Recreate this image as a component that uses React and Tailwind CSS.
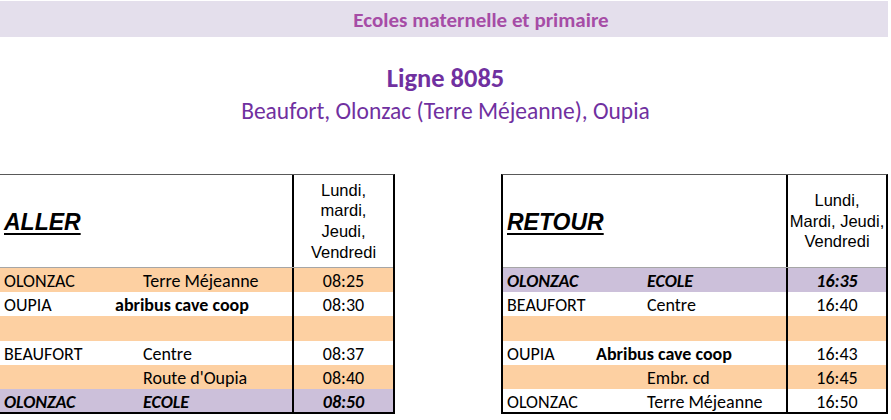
import React from 'react';

const calibri = { fontFamily: 'Carlito, Lato, "Open Sans", sans-serif' };

const ORANGE = 'bg-[#fdd0a2]';
const PURPLE = 'bg-[#ccc0da]';

const allerRows = [
  { bg: ORANGE, a: 'OLONZAC', b: 'Terre Méjeanne', t: '08:25', h: 'h-[24px]' },
  { bg: 'bg-white', a: 'OUPIA', b: 'abribus cave coop', bold: true, t: '08:30', h: 'h-[24px]' },
  { bg: ORANGE, a: '', b: '', t: '', h: 'h-[25px]' },
  { bg: 'bg-white', a: 'BEAUFORT', b: 'Centre', t: '08:37', h: 'h-[24px]' },
  { bg: ORANGE, a: '', b: "Route d'Oupia", t: '08:40', h: 'h-[24px]' },
  { bg: PURPLE, a: 'OLONZAC', b: 'ECOLE', t: '08:50', h: 'h-[23px]', strong: true },
];

const retourRows = [
  { bg: PURPLE, a: 'OLONZAC', b: 'ECOLE', t: '16:35', h: 'h-[24px]', strong: true },
  { bg: 'bg-white', a: 'BEAUFORT', b: 'Centre', t: '16:40', h: 'h-[24px]' },
  { bg: ORANGE, a: '', b: '', t: '', h: 'h-[25px]' },
  { bg: 'bg-white', a: 'OUPIA', b: 'Abribus cave coop', bold: true, t: '16:43', h: 'h-[24px]' },
  { bg: ORANGE, a: '', b: 'Embr. cd', t: '16:45', h: 'h-[24px]' },
  { bg: 'bg-white', a: 'OLONZAC', b: 'Terre Méjeanne', t: '16:50', h: 'h-[23px]' },
];

const Row = ({ row, leftW, colB, colBold }) => (
  <div className={`flex ${row.h} ${row.bg}`} style={calibri}>
    <div className={`${leftW} relative shrink-0 text-[18px] text-black leading-none`}>
      <span
        className={`absolute left-[4px] top-[calc(50%+1px)] -translate-y-1/2 ${row.strong ? 'font-bold italic' : ''}`}
      >
        {row.a}
      </span>
      <span
        className={`absolute top-[calc(50%+1px)] -translate-y-1/2 whitespace-nowrap ${
          row.bold ? `font-bold ${colBold}` : colB
        } ${row.strong ? 'font-bold italic' : ''}`}
      >
        {row.b}
      </span>
    </div>
    <div
      className={`flex-1 border-l-2 border-black flex items-center justify-center pt-[2px] text-[18px] leading-none text-black ${
        row.strong ? 'font-bold italic' : ''
      }`}
    >
      {row.t}
    </div>
  </div>
);

const Table = ({ title, days, rows, width, leftW, colB, colBold, leftBorder }) => (
  <div
    className={`${width} border-t border-t-[#595959] border-r-2 border-r-black border-b-2 border-b-black ${
      leftBorder ? 'border-l-2 border-l-black' : ''
    }`}
  >
    <div className="flex h-[93px] border-b border-b-[#a6a6a6]">
      <div
        className={`${leftW} shrink-0 flex items-center pl-[4px] pt-[3px]`}
        style={{ fontFamily: '"Liberation Sans", Arial, sans-serif' }}
      >
        <span className="text-[23px] font-bold italic underline decoration-2 underline-offset-[3px] text-black">
          {title}
        </span>
      </div>
      <div
        className="flex-1 border-l-2 border-black flex flex-col items-center justify-center text-center text-[16.5px] leading-[20.7px] text-black whitespace-nowrap"
        style={{ fontFamily: '"Liberation Sans", Arial, sans-serif' }}
      >
        {days.map((d) => (
          <span key={d}>{d}</span>
        ))}
      </div>
    </div>
    {rows.map((r, i) => (
      <Row key={i} row={r} leftW={leftW} colB={colB} colBold={colBold} />
    ))}
  </div>
);

export default function App() {
  return (
    <div className="w-[891px] h-[420px] bg-white overflow-hidden">
      {/* Header band */}
      <div
        className="mt-px h-[36px] w-[888px] bg-[#e4dfec] flex items-center justify-center pl-[74px] pt-[3px]"
        style={calibri}
      >
        <span className="text-[21px] leading-none font-bold text-[#a64ca6]">Ecoles maternelle et primaire</span>
      </div>

      {/* Title */}
      <div className="flex flex-col items-center text-[#7030a0]" style={calibri}>
        <div className="mt-[26px] text-[26.5px] font-bold leading-[30px]">Ligne 8085</div>
        <div className="mt-[4px] text-[23.5px] leading-[28px]">Beaufort, Olonzac (Terre Méjeanne), Oupia</div>
      </div>

      {/* Tables */}
      <div className="flex mt-[49px] gap-[106px]">
        <Table
          title="ALLER"
          days={['Lundi,', 'mardi,', 'Jeudi,', 'Vendredi']}
          rows={allerRows}
          width="w-[395px]"
          leftW="w-[292px]"
          colB="left-[143px]"
          colBold="left-[115px]"
        />
        <Table
          title="RETOUR"
          days={['Lundi,', 'Mardi, Jeudi,', 'Vendredi']}
          rows={retourRows}
          width="w-[387px]"
          leftW="w-[283px]"
          colB="left-[144px]"
          colBold="left-[93px]"
          leftBorder
        />
      </div>
    </div>
  );
}
